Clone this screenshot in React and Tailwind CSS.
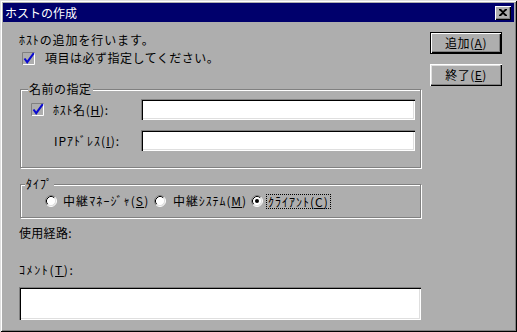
import React from "react";

function Check() {
  return (
    <svg width="13" height="13" viewBox="0 0 13 13" className="shrink-0 block">
      <path d="M0.5 12.5V0.5H12.5" fill="none" stroke="#808080" />
      <path d="M1 12.5H12.5V1" fill="none" stroke="#ffffff" />
      <path d="M2.5 6.5L5.2 10.2L11.8 1.2" fill="none" stroke="#0a0ad0" strokeWidth="2" />
    </svg>
  );
}

function Radio({ on }) {
  return (
    <svg width="12" height="12" viewBox="0 0 12 12" className="shrink-0 block">
      <circle cx="6" cy="6" r="5" fill="#ffffff" />
      <path d="M2.11 9.89A5.5 5.5 0 0 1 9.89 2.11" fill="none" stroke="#808080" />
      <path d="M9.89 2.11A5.5 5.5 0 0 1 2.11 9.89" fill="none" stroke="#ffffff" />
      <path d="M2.82 9.18A4.5 4.5 0 0 1 9.18 2.82" fill="none" stroke="#000000" />
      <path d="M9.18 2.82A4.5 4.5 0 0 1 2.82 9.18" fill="none" stroke="#dfdfdf" />
      {on && <circle cx="6" cy="6" r="2" fill="#000000" />}
    </svg>
  );
}

const sunken =
  "bg-white shadow-[inset_1px_1px_0_#808080,inset_2px_2px_0_#000,inset_-1px_-1px_0_#fff,inset_-2px_-2px_0_#dfdfdf]";
const etched =
  "border border-[#808080] shadow-[inset_1px_1px_0_#fff,1px_1px_0_#fff]";

export default function App() {
  return (
    <div className="w-[517px] h-[332px] bg-[#aeaeae] p-[3px] flex flex-col text-black text-[12px] leading-[14px] font-['Noto_Sans_CJK_JP',sans-serif] shadow-[inset_1px_1px_0_#dfdfdf,inset_-1px_-1px_0_#000,inset_2px_2px_0_#fff,inset_-2px_-2px_0_#808080] whitespace-nowrap">
      {/* title bar */}
      <div className="h-[19px] bg-[#00006c] flex items-center justify-between pl-[2px] pr-[3px]">
        <span className="text-white text-[12px] leading-[14px]">ホストの作成</span>
        <div className="w-[16px] h-[14px] bg-[#aeaeae] flex items-center justify-center shadow-[inset_1px_1px_0_#fff,inset_-1px_-1px_0_#000,inset_-2px_-2px_0_#808080]">
          <svg width="8" height="7" viewBox="0 0 8 7" className="block">
            <path d="M0 0h2l2 2 2-2h2v1L5 3.5 8 6v1H6L4 5 2 7H0V6l3-2.5L0 1z" fill="#000" />
          </svg>
        </div>
      </div>

      {/* body */}
      <div className="flex flex-1">
        <div className="ml-[16px] w-[402px] flex flex-col">
          <p className="mt-[11px] tracking-[0.9px]">ﾎｽﾄの追加を行います。</p>
          <div className="mt-[4px] h-[14px] flex items-center pl-[3px]">
            <Check />
            <span className="ml-[10px] tracking-[0.5px]">項目は必ず指定してください。</span>
          </div>

          {/* group 1 */}
          <div className={`relative mt-[24px] ml-[1px] w-[401px] ${etched}`}>
            <span className="absolute -top-[8px] left-[7px] px-[1px] bg-[#aeaeae] tracking-[0.5px]">名前の指定</span>
            <div className="pt-[9px] pb-[16px] flex flex-col gap-[10px]">
              <div className="h-[21px] flex items-center">
                <div className="w-[120px] flex items-center pl-[10px]">
                  <Check />
                  <span className="ml-[9px] tracking-[0.7px]">
                    ﾎｽﾄ名(<span className="underline">H</span>):
                  </span>
                </div>
                <div className={`w-[274px] h-[21px] ${sunken}`} />
              </div>
              <div className="h-[21px] flex items-center">
                <div className="w-[120px] flex items-center pl-[33px]">
                  <span className="tracking-[1px]">
                    IPｱﾄﾞﾚｽ(<span className="underline">I</span>):
                  </span>
                </div>
                <div className={`w-[274px] h-[21px] ${sunken}`} />
              </div>
            </div>
          </div>

          {/* group 2 */}
          <div className={`relative mt-[16px] ml-[1px] w-[401px] ${etched}`}>
            <span className="absolute -top-[8px] left-[4px] px-[1px] bg-[#aeaeae] tracking-[1px]">ﾀｲﾌﾟ</span>
            <div className="pt-[9px] pb-[9px] pl-[24px] flex items-center h-[32px]">
              <div className="w-[109px] shrink-0 flex items-center">
                <Radio />
                <span className="ml-[6px] tracking-[1.1px]">
                  中継ﾏﾈｰｼﾞｬ(<span className="underline">S</span>)
                </span>
              </div>
              <div className="w-[97px] shrink-0 flex items-center">
                <Radio />
                <span className="ml-[7px] tracking-[0.9px]">
                  中継ｼｽﾃﾑ(<span className="underline">M</span>)
                </span>
              </div>
              <div className="flex items-center">
                <Radio on />
                <span className="ml-[3px] px-[1px] border border-dotted border-black tracking-[1px] leading-[13px]">
                  ｸﾗｲｱﾝﾄ(<span className="underline">C</span>)
                </span>
              </div>
            </div>
          </div>

          <p className="mt-[8px] tracking-[0.3px]">使用経路:</p>
          <p className="mt-[23px] tracking-[1.6px]">
            ｺﾒﾝﾄ(<span className="underline">T</span>):
          </p>
          <div className={`mt-[10px] w-[402px] h-[33px] ${sunken}`} />
        </div>

        {/* buttons */}
        <div className="ml-[9px] pt-[10px] flex flex-col gap-[10px]">
          <div className="w-[72px] h-[22px] border border-black flex items-center justify-center tracking-[0.5px] shadow-[inset_1px_1px_0_#fff,inset_-1px_-1px_0_#000,inset_-2px_-2px_0_#808080]">
            追加(<span className="underline">A</span>)
          </div>
          <div className="w-[72px] h-[22px] flex items-center justify-center tracking-[0.5px] shadow-[inset_1px_1px_0_#fff,inset_-1px_-1px_0_#000,inset_-2px_-2px_0_#808080,inset_2px_2px_0_#dfdfdf]">
            終了(<span className="underline">E</span>)
          </div>
        </div>
      </div>
    </div>
  );
}
